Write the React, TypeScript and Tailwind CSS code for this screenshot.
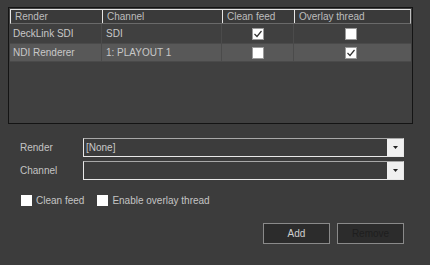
import React from 'react';

const font = { fontFamily: '"Liberation Sans", Arial, sans-serif' };

const Check: React.FC<{ checked?: boolean }> = ({ checked }) => (
  <div className="w-[12px] h-[12px] bg-white border border-[#9a9a9a] flex items-center justify-center">
    {checked && (
      <svg width="10" height="10" viewBox="0 0 10 10">
        <path d="M1.5 5 L4 7.5 L8.5 2" stroke="#333" strokeWidth="1.2" fill="none" />
      </svg>
    )}
  </div>
);

const cols = ['w-[91px]', 'w-[120px]', 'w-[72px]', 'flex-1'];

const rows = [
  { render: 'DeckLink SDI', channel: 'SDI', clean: true, overlay: false, selected: false },
  { render: 'NDI Renderer', channel: '1: PLAYOUT 1', clean: false, overlay: true, selected: true },
];

const Combo: React.FC<{ value?: string }> = ({ value }) => (
  <div className="w-[321px] h-[19px] flex border border-[#e8e8e8] border-t-[#a8a8a8] bg-[#3c3c3c]">
    <div className="flex-1 px-[2px] flex items-center text-[10px] text-[#c8c8c8]">{value}</div>
    <div className="w-[16px] bg-[#f0f0f0] flex items-center justify-center">
      <svg width="5" height="3" viewBox="0 0 5 3">
        <path d="M0 0 H5 L2.5 3 Z" fill="#222" />
      </svg>
    </div>
  </div>
);

export default function App() {
  return (
    <div className="w-[430px] h-[265px] bg-[#3c3c3c] pt-[7px] pl-[8px] text-[#c4c4c4]" style={font}>
      {/* grid */}
      <div className="w-[405px] h-[117px] border border-[#141414] bg-[#404040] flex flex-col">
        <div className="flex h-[15px] mx-[1px] mt-[1px] border-t border-l border-[#e6e6e6] border-r border-r-[#bdbdbd] border-b border-b-[#6a6a6a] bg-[#3a3a3a] text-[10px] leading-[13px]">
          {['Render', 'Channel', 'Clean feed', 'Overlay thread'].map((h, i) => (
            <div key={h} className={`${cols[i]} ${i > 0 ? 'border-l border-[#e6e6e6]' : ''} pl-[4px] text-[#bdbdbd]`}>
              {h}
            </div>
          ))}
        </div>
        {rows.map((r) => (
          <div
            key={r.render}
            className={`flex h-[19px] mx-[1px] text-[10px] items-stretch ${r.selected ? 'bg-[#585858] border-y border-[#4a4a4a]' : ''}`}
          >
            <div className={`${cols[0]} pl-[3px] flex items-center text-[#c8c8c8]`}>{r.render}</div>
            <div className={`${cols[1]} pl-[4px] flex items-center border-l border-[#4b4b4b] text-[#c8c8c8]`}>{r.channel}</div>
            <div className={`${cols[2]} flex items-center justify-center border-l border-[#4b4b4b]`}>
              <Check checked={r.clean} />
            </div>
            <div className={`${cols[3]} flex items-center justify-center border-l border-[#4b4b4b] pr-[3px]`}>
              <Check checked={r.overlay} />
            </div>
          </div>
        ))}
      </div>

      {/* form */}
      <div className="mt-[14px] pl-[12px] flex flex-col gap-[4px] text-[10px]">
        <div className="flex items-center">
          <div className="w-[63px] text-[#c4c4c4]">Render</div>
          <Combo value="[None]" />
        </div>
        <div className="flex items-center">
          <div className="w-[63px] text-[#c4c4c4]">Channel</div>
          <Combo />
        </div>
        <div className="flex items-center mt-[9px] pl-[1px] gap-[4px]">
          <div className="w-[11px] h-[11px] bg-white" />
          <span className="text-[#c4c4c4] mr-[9px]">Clean feed</span>
          <div className="w-[11px] h-[11px] bg-white" />
          <span className="text-[#c4c4c4]">Enable overlay thread</span>
        </div>
      </div>

      <div className="flex justify-end gap-[7px] w-[396px] mt-[15px] text-[10px]">
        <button className="w-[67px] h-[21px] bg-[#2c2c2c] border border-[#8a8a8a] text-[#cfcfcf]">Add</button>
        <button className="w-[67px] h-[21px] bg-[#2c2c2c] border border-[#8a8a8a] text-[#1e1e1e]">Remove</button>
      </div>
    </div>
  );
}
